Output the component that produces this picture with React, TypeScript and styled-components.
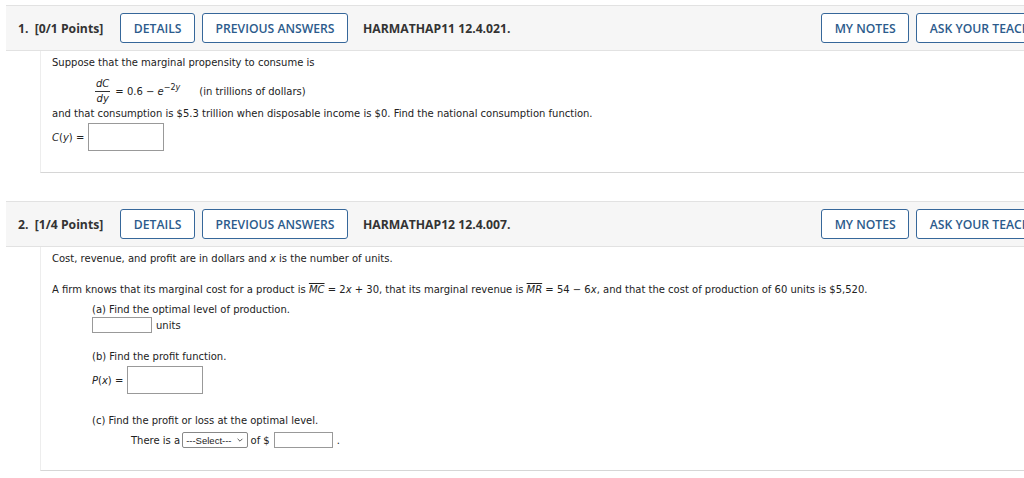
import styled, { createGlobalStyle } from 'styled-components';

const GlobalStyle = createGlobalStyle`
  html, body {
    margin: 0;
    padding: 0;
    background: #fff;
    overflow: hidden;
  }
  body {
    font-family: "DejaVu Sans", Verdana, sans-serif;
    color: #222;
  }
`;

const Page = styled.div`
  width: 1057px;
  padding: 5px 0 0 6px;
`;

const Question = styled.section<{ $gap?: number }>`
  margin-top: ${p => p.$gap ?? 0}px;
`;

const Header = styled.header`
  display: flex;
  align-items: center;
  height: 44px;
  padding: 0 4px 0 12px;
  background: #f6f6f6;
  border-top: 1px solid #e2e2e2;
  border-bottom: 1px solid #e2e2e2;
  font-family: "Open Sans", "Liberation Sans", sans-serif;
  font-size: 12.2px;
  font-weight: 700;
  color: #333;
`;

const Points = styled.span`
  white-space: pre;
  margin-right: 17px;
`;

const Code = styled.span`
  margin-left: 15px;
`;

const LeftButtons = styled.div`
  display: flex;
  gap: 7px;
`;

const RightButtons = styled.div`
  margin-left: auto;
  display: flex;
  gap: 7px;
`;

const HeaderButton = styled.button`
  height: 30px;
  padding: 0 12.5px;
  background: #fff;
  border: 1.5px solid #36679a;
  border-radius: 3px;
  font-family: "Open Sans", "Liberation Sans", sans-serif;
  font-size: 12.2px;
  font-weight: 600;
  color: #2c5b8c;
  white-space: nowrap;
`;

const Body = styled.div<{ $pb: number }>`
  margin-left: 34px;
  padding: 6px 11px ${p => p.$pb}px;
  border-left: 1px solid #ededed;
  border-bottom: 1px solid #d6d6d6;
  font-size: 10px;
`;

const Para = styled.p<{ $mt?: number; $indent?: number }>`
  margin: ${p => p.$mt ?? 0}px 0 0 ${p => p.$indent ?? 0}px;
  line-height: 12px;
  white-space: nowrap;
`;

const Row = styled.div<{ $mt?: number; $indent?: number }>`
  display: flex;
  align-items: center;
  margin: ${p => p.$mt ?? 0}px 0 0 ${p => p.$indent ?? 0}px;
  white-space: nowrap;
`;

const Frac = styled.span`
  display: inline-flex;
  flex-direction: column;
  align-items: center;
  margin-right: 5px;
`;

const Num = styled.span`
  padding: 0 1px 1px;
  border-bottom: 1px solid #333;
  line-height: 13px;
  font-style: italic;
`;

const Den = styled.span`
  line-height: 13px;
  font-style: italic;
`;

const I = styled.i`
  font-style: italic;
`;

const Sup = styled.sup`
  font-size: 8px;
  vertical-align: 5px;
  line-height: 0;
`;

const Over = styled.i`
  font-style: italic;
  text-decoration: overline;
`;

const Note = styled.span`
  margin-left: 19px;
`;

const Input = styled.span<{ $w: number; $h: number }>`
  display: inline-block;
  width: ${p => p.$w}px;
  height: ${p => p.$h}px;
  box-sizing: border-box;
  border: 1px solid #999;
  background: #fff;
  margin: 0 4px;
`;

const Select = styled.span`
  display: inline-flex;
  align-items: center;
  gap: 4px;
  height: 16px;
  box-sizing: border-box;
  padding: 0 3px 0 3px;
  margin: 0 3px 0 2px;
  border: 1px solid #888;
  border-radius: 2px;
  font-family: "Liberation Sans", Arial, sans-serif;
  font-size: 9.5px;
  color: #222;
  svg { width: 8px; height: 8px; }
`;

function Chevron() {
  return (
    <svg viewBox="0 0 10 10" fill="none" stroke="#555" strokeWidth="1.2">
      <path d="M2 3.5 L5 6.5 L8 3.5" />
    </svg>
  );
}

type HeadProps = { num: string; points: string; code: string };

function QuestionHeader({ num, points, code }: HeadProps) {
  return (
    <Header>
      <Points>{`${num}.  [${points} Points]`}</Points>
      <LeftButtons>
        <HeaderButton>DETAILS</HeaderButton>
        <HeaderButton>PREVIOUS ANSWERS</HeaderButton>
      </LeftButtons>
      <Code>{code}</Code>
      <RightButtons>
        <HeaderButton>MY NOTES</HeaderButton>
        <HeaderButton>ASK YOUR TEACHER</HeaderButton>
      </RightButtons>
    </Header>
  );
}

export default function App() {
  return (
    <>
      <GlobalStyle />
      <Page>
        <Question>
          <QuestionHeader num="1" points="0/1" code="HARMATHAP11 12.4.021." />
          <Body $pb={21}>
            <Para>Suppose that the marginal propensity to consume is</Para>
            <Row $mt={8} $indent={43}>
              <Frac>
                <Num>dC</Num>
                <Den>dy</Den>
              </Frac>
              <span>= 0.6 − <I>e</I><Sup>−2<I>y</I></Sup></span>
              <Note>(in trillions of dollars)</Note>
            </Row>
            <Para $mt={3}>and that consumption is $5.3 trillion when disposable income is $0. Find the national consumption function.</Para>
            <Row $mt={3}>
              <span><I>C</I>(<I>y</I>) =</span>
              <Input $w={76} $h={28} />
            </Row>
          </Body>
        </Question>

        <Question $gap={28}>
          <QuestionHeader num="2" points="1/4" code="HARMATHAP12 12.4.007." />
          <Body $pb={22}>
            <Para>Cost, revenue, and profit are in dollars and <I>x</I> is the number of units.</Para>
            <Para $mt={19}>
              A firm knows that its marginal cost for a product is <Over>MC</Over> = 2<I>x</I> + 30, that its marginal revenue is <Over>MR</Over> = 54 − 6<I>x</I>, and that the cost of production of 60 units is $5,520.
            </Para>
            <Para $mt={8} $indent={40}>(a) Find the optimal level of production.</Para>
            <Row $mt={1} $indent={36}>
              <Input $w={60} $h={16} />
              <span>units</span>
            </Row>
            <Para $mt={18} $indent={40}>(b) Find the profit function.</Para>
            <Row $mt={3} $indent={40}>
              <span><I>P</I>(<I>x</I>) =</span>
              <Input $w={76} $h={28} />
            </Row>
            <Para $mt={21} $indent={40}>(c) Find the profit or loss at the optimal level.</Para>
            <Row $mt={5} $indent={79}>
              <span>There is a</span>
              <Select>---Select---<Chevron /></Select>
              <span>of $</span>
              <Input $w={59} $h={16} />
              <span>.</span>
            </Row>
          </Body>
        </Question>
      </Page>
    </>
  );
}
